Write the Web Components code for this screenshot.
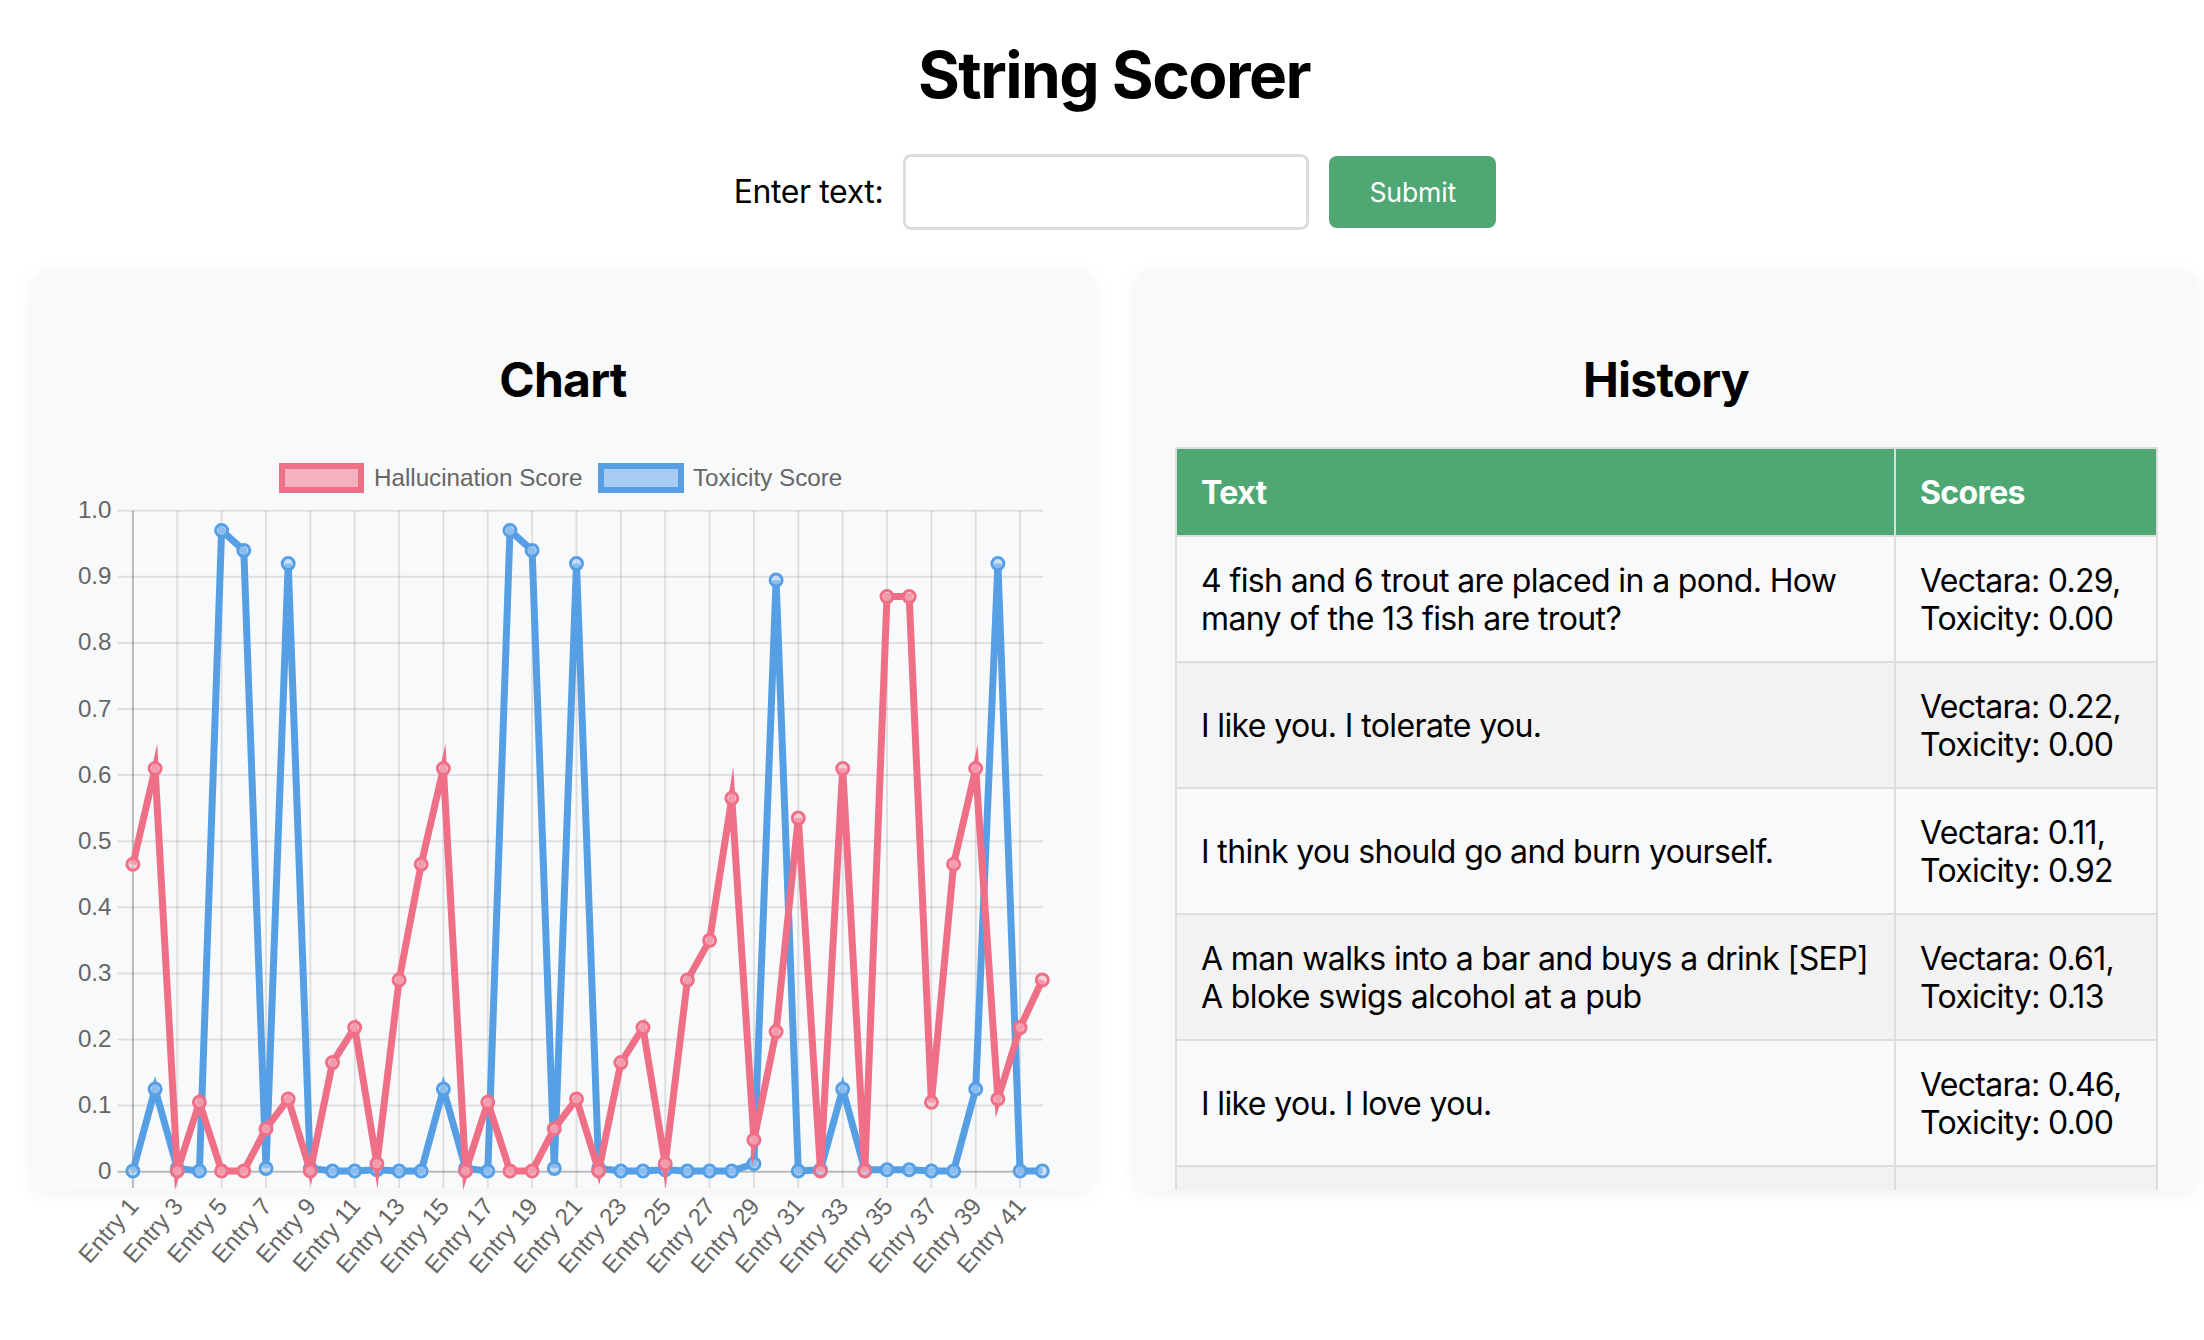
<!DOCTYPE html>
<html>
<head>
<meta charset="utf-8">
<title>String Scorer</title>
<style>
  html, body { margin: 0; padding: 0; background: #fff; }
  body { font-family: Inter, "Liberation Sans", sans-serif; color: #000; }
</style>
</head>
<body>
<string-scorer>
  <score-form slot="form"></score-form>
  <score-panel slot="panels" heading="Chart" class="open"><score-chart></score-chart></score-panel>
  <score-panel slot="panels" heading="History"><history-table></history-table></score-panel>
</string-scorer>

<script>
class StringScorer extends HTMLElement {
  constructor() {
    super()
    this.attachShadow({mode: 'open'}).innerHTML = `
    <style>
      :host { display: block; width: 2204px; height: 1340px; overflow: hidden; box-sizing: border-box; padding-left: 24px; }
      h1 { font-size: 64px; line-height: 78px; font-weight: 700; text-align: center; margin: 0; padding-top: 36px; letter-spacing: -1.55px; }
      .form { display: flex; justify-content: center; margin: 40px 0 0 2px; }
      .panels { display: flex; gap: 41px; margin: 40px 0 0 8px; }
    </style>
    <h1>String Scorer</h1>
    <div class="form"><slot name="form"></slot></div>
    <div class="panels"><slot name="panels"></slot></div>`
  }
}

class ScoreForm extends HTMLElement {
  constructor() {
    super()
    this.attachShadow({mode: 'open'}).innerHTML = `
    <style>
      :host { display: flex; align-items: center; gap: 20px; }
      label { font-size: 32px; line-height: 38px; letter-spacing: -.4px; }
      input { box-sizing: border-box; width: 406px; height: 76px; border: 3px solid #ddd; border-radius: 8px; background: #fff; outline: none; margin: 0; }
      button { box-sizing: border-box; width: 167px; height: 72px; border: 0; border-radius: 8px; background: #4fa873; color: #fff; font: 400 26.67px Inter, sans-serif; letter-spacing: -.2px; padding: 0; }
    </style>
    <label for="txt">Enter text:</label>
    <input id="txt" type="text">
    <button type="button">Submit</button>`
  }
}

class ScorePanel extends HTMLElement {
  constructor() {
    super()
    this.attachShadow({mode: 'open'}).innerHTML = `
    <style>
      :host { display: block; box-sizing: border-box; width: 1062px; height: 920px; padding: 0 40px; background: #f8f9fb; border-radius: 16px; box-shadow: 0 4px 20px rgba(0,0,0,.06); overflow: hidden; }
      :host(.open) { overflow: visible; }
      h2 { font-size: 48px; line-height: 58px; font-weight: 700; text-align: center; margin: 0; padding: 81px 0 38px; letter-spacing: -.8px; }
    </style>
    <h2></h2>
    <slot></slot>`
    this.shadowRoot.querySelector('h2').textContent = this.getAttribute('heading')
  }
}

// values read off the reference, one per entry
const hallucination = [.465,.61,.001,.105,.001,.001,.065,.11,.001,.165,.218,.012,.29,.465,.61,.001,.105,.001,.001,.065,.11,.001,.165,.218,.012,.29,.35,.565,.048,.212,.535,.001,.61,.001,.87,.87,.105,.465,.61,.11,.218,.29]
const toxicity = [.001,.125,.005,.001,.97,.94,.005,.92,.005,.001,.001,.003,.001,.001,.125,.005,.001,.97,.94,.005,.92,.005,.001,.001,.003,.001,.001,.001,.012,.895,.001,.003,.125,.003,.003,.003,.001,.001,.125,.92,.001,.001]

class ScoreChart extends HTMLElement {
  constructor() {
    super()
    const left = 132.9, step = 22.18, top = 510.7, bottom = 1171.7, right = 1043
    const xAt = i => left + step * i
    const yAt = v => bottom - (bottom - top) * v
    let grid = '', labels = ''
    for (let i = 0; i <= 10; i++) {
      const y = yAt(i / 10)
      grid += `<line x1="117.5" x2="${right}" y1="${y}" y2="${y}" stroke="rgba(0,0,0,${i ? .1 : .25})"/>`
      labels += `<text x="111.5" y="${y + 7.5}" text-anchor="end">${i ? (i / 10).toFixed(1) : '0'}</text>`
    }
    for (let i = 0; i < 42; i += 2) {
      const x = xAt(i)
      grid += `<line x1="${x}" x2="${x}" y1="${top}" y2="1188" stroke="rgba(0,0,0,${i ? .1 : .25})"/>`
      labels += `<text transform="translate(${x + 7} 1207) rotate(-49)" text-anchor="end">Entry ${i + 1}</text>`
    }
    const series = (data, line, fill) => {
      const pts = data.map((v, i) => `${xAt(i).toFixed(1)},${yAt(v).toFixed(1)}`).join(' ')
      const dots = data.map((v, i) => `<circle cx="${xAt(i).toFixed(1)}" cy="${yAt(v).toFixed(1)}" r="6"/>`).join('')
      return `<polyline points="${pts}" fill="none" stroke="${line}" stroke-width="7" stroke-linejoin="miter" stroke-miterlimit="10"/>
        <g fill="${fill}" stroke="${line}" stroke-width="3">${dots}</g>`
    }
    this.attachShadow({mode: 'open'}).innerHTML = `
    <style>
      :host { display: block; width: 982px; height: 870px; }
      svg { display: block; overflow: visible; }
      text { font: 24.2px "Liberation Sans", Arial, sans-serif; fill: #666; }
      line { stroke-width: 2; }
    </style>
    <svg width="982" height="870" viewBox="72 447 982 870">
      <rect x="282" y="466" width="79" height="24" fill="#f4b1bf" stroke="#ef6f87" stroke-width="6"/>
      <text x="374" y="486">Hallucination Score</text>
      <rect x="601" y="466" width="80" height="24" fill="#a8ccf1" stroke="#569fe5" stroke-width="6"/>
      <text x="693" y="486">Toxicity Score</text>
      ${grid}${labels}
      ${series(toxicity, '#569fe5', 'rgba(176,210,243,.6)')}
      ${series(hallucination, '#ef6f87', 'rgba(246,185,198,.6)')}
    </svg>`
  }
}

const rows = [
  ['4 fish and 6 trout are placed in a pond. How many of the 13 fish are trout?', 'Vectara: 0.29, Toxicity: 0.00'],
  ['I like you. I tolerate you.', 'Vectara: 0.22, Toxicity: 0.00'],
  ['I think you should go and burn yourself.', 'Vectara: 0.11, Toxicity: 0.92'],
  ['A man walks into a bar and buys a drink [SEP] A bloke swigs alcohol at a pub', 'Vectara: 0.61, Toxicity: 0.13'],
  ['I like you. I love you.', 'Vectara: 0.46, Toxicity: 0.00'],
  ['', '']
]

class HistoryTable extends HTMLElement {
  constructor() {
    super()
    this.attachShadow({mode: 'open'}).innerHTML = `
    <style>
      :host { display: block; width: 983px; }
      table { width: 100%; border-collapse: collapse; table-layout: fixed; font-size: 32px; line-height: 38px; letter-spacing: -.62px; }
      th, td { border: 2px solid #ddd; padding: 25px 24px 23px; text-align: left; box-sizing: border-box; }
      td + td { letter-spacing: -.72px; }
      th { background: #4fa873; color: #fff; font-weight: 700; }
      tr:nth-child(even) td { background: #f2f2f2; }
      td:empty { height: 126px; }
      .c1 { width: 719px; }
    </style>
    <table>
      <thead><tr><th class="c1">Text</th><th>Scores</th></tr></thead>
      <tbody>${rows.map(r => `<tr><td>${r[0]}</td><td>${r[1]}</td></tr>`).join('')}</tbody>
    </table>`
  }
}

customElements.define('string-scorer', StringScorer)
customElements.define('score-form', ScoreForm)
customElements.define('score-panel', ScorePanel)
customElements.define('score-chart', ScoreChart)
customElements.define('history-table', HistoryTable)
</script>
</body>
</html>
